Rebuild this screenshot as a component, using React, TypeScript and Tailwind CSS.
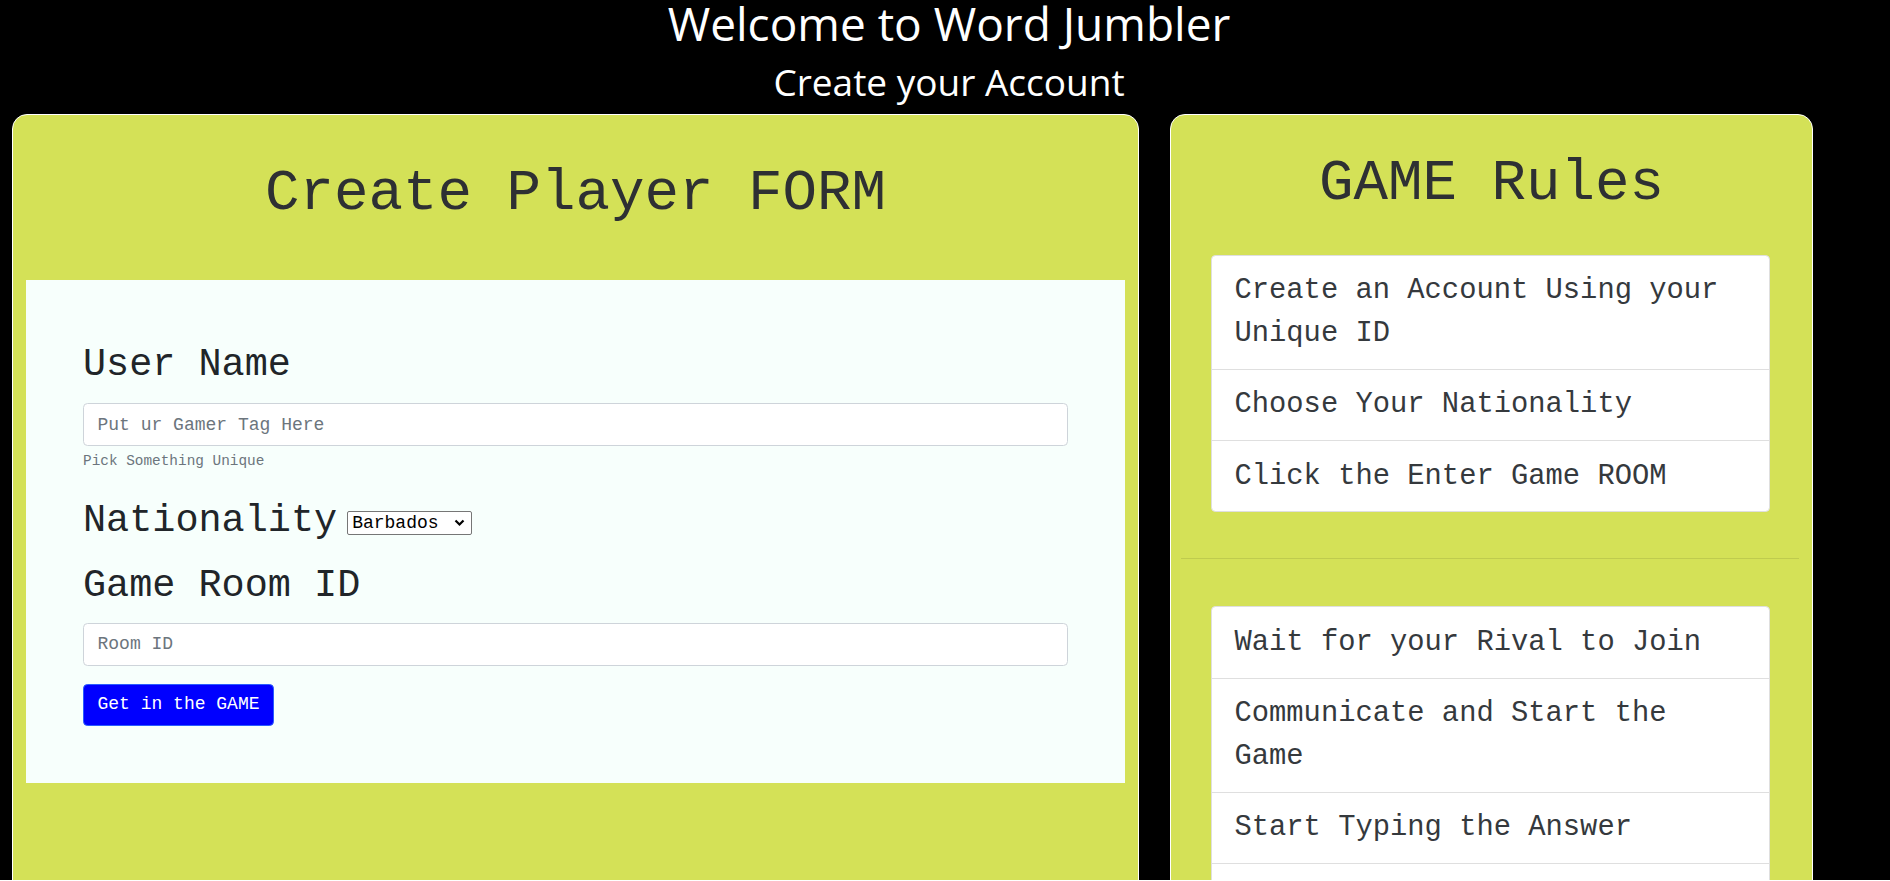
import React from "react";

const mono = "font-['Liberation_Mono','Courier_New',monospace]";

function RuleList({ items }: { items: string[] }) {
  return (
    <div className="ml-[40px] w-[559px] overflow-hidden rounded-[4.5px] border border-[#dfdfdf] bg-white">
      {items.map((text, i) => (
        <div
          key={i}
          className={
            "px-[22.5px] py-[13.5px] text-[28.8px] leading-[1.5] text-[#35393d] " +
            (i > 0 ? "border-t border-[#dfdfdf]" : "")
          }
        >
          {text}
        </div>
      ))}
    </div>
  );
}

function PlayerForm() {
  return (
    <div className="w-[1127px] shrink-0 rounded-[15px] border border-white bg-[#d4e157] px-[13px] pb-[140px]">
      <h1 className="pt-[44px] text-center text-[57.5px] leading-[1.2] text-[#2e3033]">Create Player FORM</h1>
      <form className="mt-[51.5px] bg-[#f7fffc] px-[57px] pt-[61px] pb-[57px] text-[18px] text-[#212529]">
        <h2 className="mb-[15px] pt-[1.5px] text-[38.5px] leading-[1.2]">User Name</h2>
        <input
          type="text"
          placeholder="Put ur Gamer Tag Here"
          className="block h-[43px] w-full rounded-[4.5px] border border-[#ced4da] bg-white px-[13.5px] text-[18px] placeholder:text-[#6c757d] outline-none"
        />
        <small className="mt-[4.5px] block text-[14.4px] leading-[1.5] text-[#6c757d]">Pick Something Unique</small>

        <div className="mt-[24px] flex items-start gap-[10px]">
          <h2 className="pt-[2px] text-[38.5px] leading-[1.2]">Nationality</h2>
          <span className="relative mt-[14.6px] inline-block">
            <select
              defaultValue="Barbados"
              className="block h-[24px] w-[125px] appearance-none rounded-[2px] border border-[#767676] bg-white pl-[4px] text-[18px] leading-[20px] text-black outline-none"
            >
              <option>Barbados</option>
              <option>Jamaica</option>
              <option>Trinidad and Tobago</option>
              <option>Guyana</option>
            </select>
            <svg
              className="pointer-events-none absolute right-[7px] top-[8px]"
              width="11"
              height="8"
              viewBox="0 0 11 8"
              fill="none"
              stroke="black"
              strokeWidth="2.2"
            >
              <path d="M1.5 1.5l4 4 4-4" />
            </svg>
          </span>
        </div>

        <h2 className="mt-[18.5px] mb-[13.5px] text-[38.5px] leading-[1.2]">Game Room ID</h2>
        <input
          type="text"
          placeholder="Room ID"
          className="block h-[43px] w-full rounded-[4.5px] border border-[#ced4da] bg-white px-[13.5px] text-[18px] placeholder:text-[#6c757d] outline-none"
        />
        <button
          type="button"
          className="mt-[18px] h-[42px] rounded-[4.5px] border border-[#2a5dff] bg-[#0000ff] px-[13.5px] text-[18px] text-white"
        >
          Get in the GAME
        </button>
      </form>
    </div>
  );
}

function GameRules() {
  return (
    <div className="w-[643px] shrink-0 rounded-[15px] border border-white bg-[#d4e157] pb-[40px]">
      <h1 className="pt-[34px] text-center text-[57.5px] leading-[1.2] text-[#2e3033]">GAME Rules</h1>
      <div className="mt-[36.6px]">
        <RuleList
          items={[
            "Create an Account Using your Unique ID",
            "Choose Your Nationality",
            "Click the Enter Game ROOM",
          ]}
        />
      </div>
      <div className="mt-[46px] ml-[10px] h-px w-[618px] bg-[#bfcb4e]" />
      <div className="mt-[47px]">
        <RuleList
          items={[
            "Wait for your Rival to Join",
            "Communicate and Start the Game",
            "Start Typing the Answer",
            "",
          ]}
        />
      </div>
    </div>
  );
}

export default function App() {
  return (
    <div className="h-[880px] overflow-hidden bg-black">
      <header className="pl-[8px] text-center text-white font-['Open_Sans','Noto_Sans',sans-serif]">
        <h1 className="text-[46px] leading-[46px]">Welcome to Word Jumbler</h1>
        <h2 className="mt-[14px] text-[37px] leading-[44px]">Create your Account</h2>
      </header>
      <main className={"mt-[10px] flex gap-[31px] pl-[12px] " + mono}>
        <PlayerForm />
        <GameRules />
      </main>
    </div>
  );
}
